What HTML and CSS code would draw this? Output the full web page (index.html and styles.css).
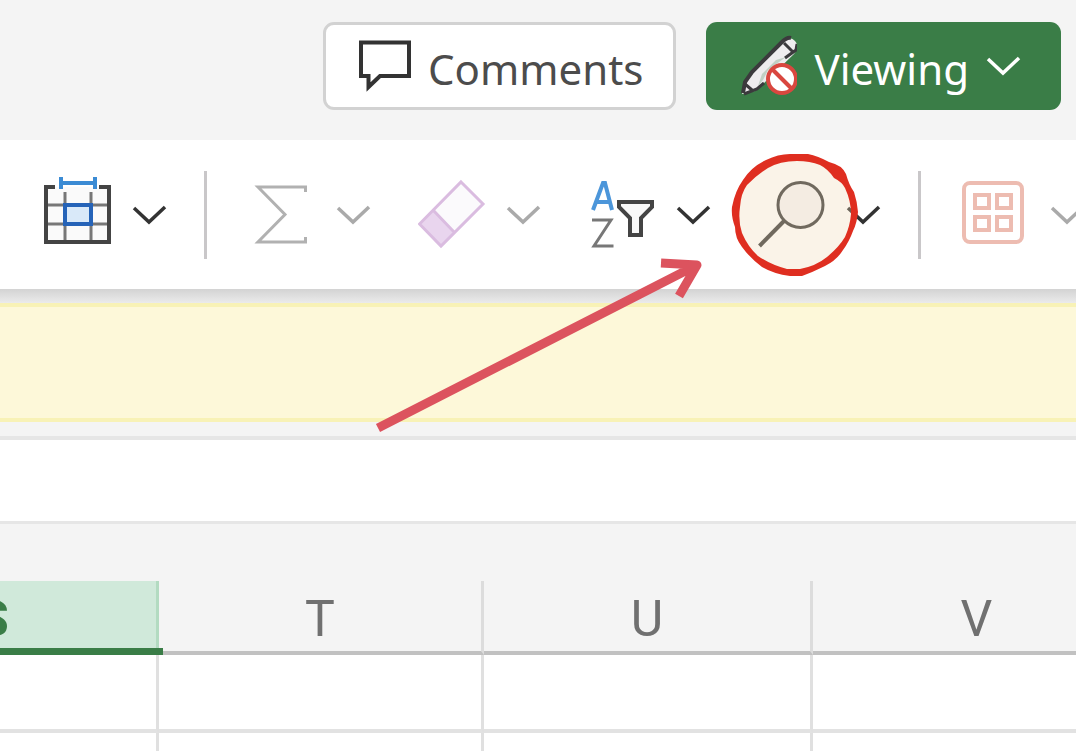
FILE: index.html
```html
<!DOCTYPE html>
<html lang="en">
<head>
<meta charset="utf-8">
<title>Spreadsheet</title>
<link rel="stylesheet" href="styles.css">
</head>
<body>
<svg class="defs" aria-hidden="true">
  <symbol id="chevron" viewBox="0 0 36 24"><path d="M2 5L17 19L33 4" fill="none" stroke="currentColor" stroke-width="3.500"/></symbol>
</svg>
<header class="actions">
  <button class="action comments" type="button">
    <svg class="comment-icon" viewBox="359 26 52 80" aria-hidden="true"><path d="M361 42.500H409V76H380L368.500 87V76H361Z" fill="#fff" stroke="#333" stroke-width="4"/></svg>
    <span class="label">Comments</span>
  </button>
  <button class="action viewing" type="button">
    <svg class="pen-icon" viewBox="741 26 56 80" aria-hidden="true">
      <path d="M742 94L744 82L751 72L782 42Q790 35 795 41Q800 47 794 54L763 84L755 91Z" fill="#eeecee"/>
      <path d="M743 93L745 82L752 72L782 42Q787 37 791 38" fill="none" stroke="#3b3a3d" stroke-width="4"/>
      <path d="M744 94L757 89L764 83M785 58L796 50L797 44M784 43L793 52M745 84L752 90" fill="none" stroke="#3b3a3d" stroke-width="3"/>
      <path d="M776 60L786 57L768 70L763 80L758 86L762 74Z" fill="#3a7d47" fill-opacity=".25"/>
      <circle cx="782" cy="79" r="14" fill="#fff" stroke="#d9473f" stroke-width="4"/>
      <path d="M772 69L792 89" stroke="#d9473f" stroke-width="4"/>
    </svg>
    <span class="label">Viewing</span>
    <svg class="chevron" aria-hidden="true"><use href="#chevron"/></svg>
  </button>
</header>

<nav class="toolbar" aria-label="Ribbon">
  <button class="tool" type="button" aria-label="Format cells">
    <svg class="icon" viewBox="44 175 68 80">
      <path d="M46 187H109V242H46Z" fill="#fafafa"/>
      <path d="M65 192V242M91 192V242M46 205H109M46 224H109" fill="none" stroke="#777" stroke-width="3"/>
      <path d="M55 187H46V242H109V187H99" fill="none" stroke="#444" stroke-width="4"/>
      <path d="M65 205H91V224H65Z" fill="#d9e9f9" stroke="#2563b8" stroke-width="4"/>
      <path d="M61 177V189M95 177V189M61 183H95" fill="none" stroke="#3b8bd4" stroke-width="4"/>
    </svg>
    <svg class="chevron" aria-hidden="true"><use href="#chevron"/></svg>
  </button>
  <span class="separator"></span>
  <button class="tool muted" type="button" aria-label="Sum">
    <svg class="icon" viewBox="248 175 68 80"><path d="M305.500 192V187H258L285 214.500L258 242H305.500V237" fill="none" stroke="#b1b1b1" stroke-width="3"/></svg>
    <svg class="chevron" aria-hidden="true"><use href="#chevron"/></svg>
  </button>
  <button class="tool muted" type="button" aria-label="Clear">
    <svg class="icon" viewBox="418 175 68 80">
      <path d="M461 182L483 204L441 246L419.500 224Z" fill="#fbfafc"/>
      <path d="M433 210L454 232L441 246L419.500 224Z" fill="#e9d5ee"/>
      <path d="M461 182L483 204L441 246L419.500 224ZM433 210L454 232" fill="none" stroke="#dabce0" stroke-width="3"/>
    </svg>
    <svg class="chevron" aria-hidden="true"><use href="#chevron"/></svg>
  </button>
  <button class="tool" type="button" aria-label="Sort and filter">
    <svg class="icon" viewBox="588 175 68 80">
      <path d="M593 210L603 183H605L612 210M596 202H611" fill="none" stroke="#4c96da" stroke-width="4"/>
      <path d="M592 220H611L594 246H613.500" fill="none" stroke="#777" stroke-width="3"/>
      <path d="M619 202H652V207L641 218V235H630V218L619 207Z" fill="#f8f8f8" stroke="#444" stroke-width="4"/>
    </svg>
    <svg class="chevron" aria-hidden="true"><use href="#chevron"/></svg>
  </button>
  <button class="tool" type="button" aria-label="Find">
    <svg class="icon" viewBox="758 175 68 80"><circle cx="800.500" cy="205" r="22" fill="#f6f5f6"/><circle cx="800.500" cy="205" r="22.500" fill="none" stroke="#3a3a3a" stroke-width="3"/><path d="M784 221L759.500 246" stroke="#3a3a3a" stroke-width="4"/></svg>
    <svg class="chevron" aria-hidden="true"><use href="#chevron"/></svg>
  </button>
  <span class="separator"></span>
  <button class="tool muted" type="button" aria-label="Add-ins">
    <svg class="icon" viewBox="962 175 68 80"><g fill="none" stroke="#edbcb1" stroke-width="4"><rect x="964" y="183" width="58" height="59" rx="6"/><path d="M975 195H989V208H975ZM997 195H1011V208H997ZM975 217H989V230H975ZM997 217H1011V230H997Z"/></g></svg>
    <svg class="chevron" aria-hidden="true"><use href="#chevron"/></svg>
  </button>
</nav>
<div class="shade"></div>
<div class="notice"></div>
<div class="formula-row"><input class="formula" type="text" aria-label="Formula bar"></div>
<main class="sheet">
  <table class="grid">
    <colgroup><col class="col-s"><col class="col-t"><col class="col-u"><col class="col-v"></colgroup>
    <thead><tr><th class="selected" scope="col">S</th><th scope="col">T</th><th scope="col">U</th><th scope="col">V</th></tr></thead>
    <tbody><tr><td></td><td></td><td></td><td></td></tr><tr><td></td><td></td><td></td><td></td></tr></tbody>
  </table>
</main>

<svg class="annotation" width="1076" height="751" viewBox="0 0 1076 751" aria-hidden="true">
  <path d="M797 157Q822 158 843 175Q853 190 854 214Q852 238 831 260Q815 273 797 273Q765 268 746 245Q733 222 739 193Q749 170 774 160Z" fill="#eed7b2" fill-opacity=".3"/>
  <path fill="#df2e20" fill-rule="evenodd" d="M790 154H808Q818 156 829 162Q842 165 846 174Q849 185 854 192Q857 201 858 212Q857 223 853 231Q849 242 843 250Q837 260 825 266Q813 272 802 276H790Q774 274 762 267Q750 258 742 247Q735 238 735 227Q731 216 732 207Q735 191 743 180Q751 167 766 160Q778 154 790 154ZM797 161Q780 161 768 168Q758 174 747 185Q741 193 740 207Q738 221 742 233Q748 247 758 256Q771 265 787 269H800Q816 266 827 257Q839 247 845 237Q850 226 851 214Q851 201 845 188Q842 182 834 178Q828 169 820 165Q810 161 797 161Z"/>
  <path d="M378 428L697 265M661 263L697 265L679 296" fill="none" stroke="#dc535e" stroke-width="9" stroke-linejoin="round"/>
</svg>
</body>
</html>
```
FILE: styles.css
```css
* { box-sizing: border-box; }
body {
  display: flex;
  flex-direction: column;
  margin: 0;
  height: 100vh;
  position: relative;
  overflow: hidden;
  background: #f4f4f4;
  font-family: "Noto Sans", "Open Sans", sans-serif;
}
button { margin: 0; border: 0; background: none; font: inherit; color: inherit; }
svg { display: block; flex: none; }
.defs { position: absolute; width: 0; height: 0; }

.actions {
  display: flex;
  flex: none;
  justify-content: flex-end;
  gap: 30px;
  height: 140px;
  padding: 22px 15px 30px;
}
.action {
  display: flex;
  align-items: center;
  height: 88px;
  border-radius: 11px;
  font-size: 42px;
  line-height: 56px;
}
.comments {
  gap: 17px;
  padding: 0 30px 0 33px;
  border: 3px solid #d2d2d2;
  background: #fff;
  color: #4c4c4c;
}
.viewing {
  gap: 17px;
  padding: 0 39px 0 35px;
  background: #3a7d47;
  color: #fff;
}
.label { padding-top: 6px; }
.comment-icon { width: 52px; height: 80px; }
.pen-icon { width: 56px; height: 80px; }
.chevron { width: 36px; height: 24px; }

.toolbar {
  display: flex;
  flex: none;
  align-items: center;
  height: 149px;
  padding-left: 21px;
  background: #fff;
}
.tool {
  display: flex;
  flex: none;
  align-items: center;
  gap: 20px;
  padding: 0 23px;
  color: #333;
}
.muted { color: #aaa; }
.icon { width: 68px; height: 80px; }
.separator {
  flex: none;
  width: 3px;
  height: 88px;
  margin: 0 18px 0 13px;
  background: #c9c7c9;
}

.shade { flex: none; height: 14px; background: linear-gradient(#d3d3d3, #ebebeb); }
.notice {
  flex: none;
  height: 119px;
  border: solid #f8f2b6;
  border-width: 4px 0;
  background: #fdf8d9;
}
.formula-row { flex: none; padding: 14px 0 57px; }
.formula {
  display: block;
  width: 100%;
  height: 88px;
  padding: 0 16px;
  border: solid #e6e6e6;
  border-width: 4px 0 3px;
  border-radius: 0;
  background: #fff;
  font: inherit;
}

.sheet { flex: 1; min-height: 0; overflow: hidden; }
.grid {
  width: 1312px;
  margin-left: -169px;
  table-layout: fixed;
  border-collapse: separate;
  border-spacing: 0;
}
.col-s { width: 328px; }
.col-t { width: 325px; }
.col-u { width: 329px; }
.col-v { width: 330px; }
.grid th {
  position: relative;
  height: 74px;
  padding: 6px 0 0;
  border-right: 3px solid #dcdcdc;
  border-bottom: 4px solid #c1c1c1;
  color: #707070;
  font: 400 50px/64px "Liberation Sans Narrow", Roboto, sans-serif;
}
.grid .selected {
  border-right-color: #b3dbc1;
  background: #d0e9da;
  color: #3a7d47;
  font-weight: 700;
}
.grid .selected::after {
  content: "";
  position: absolute;
  right: -7px;
  bottom: -4px;
  left: 0;
  z-index: 1;
  height: 7px;
  background: #3a7d47;
}
.grid td {
  height: 78px;
  padding: 0;
  border-right: 3px solid #e0e0e0;
  border-bottom: 4px solid #e2e2e2;
  background: #fff;
}
.annotation { position: absolute; top: 0; left: 0; pointer-events: none; }
```
